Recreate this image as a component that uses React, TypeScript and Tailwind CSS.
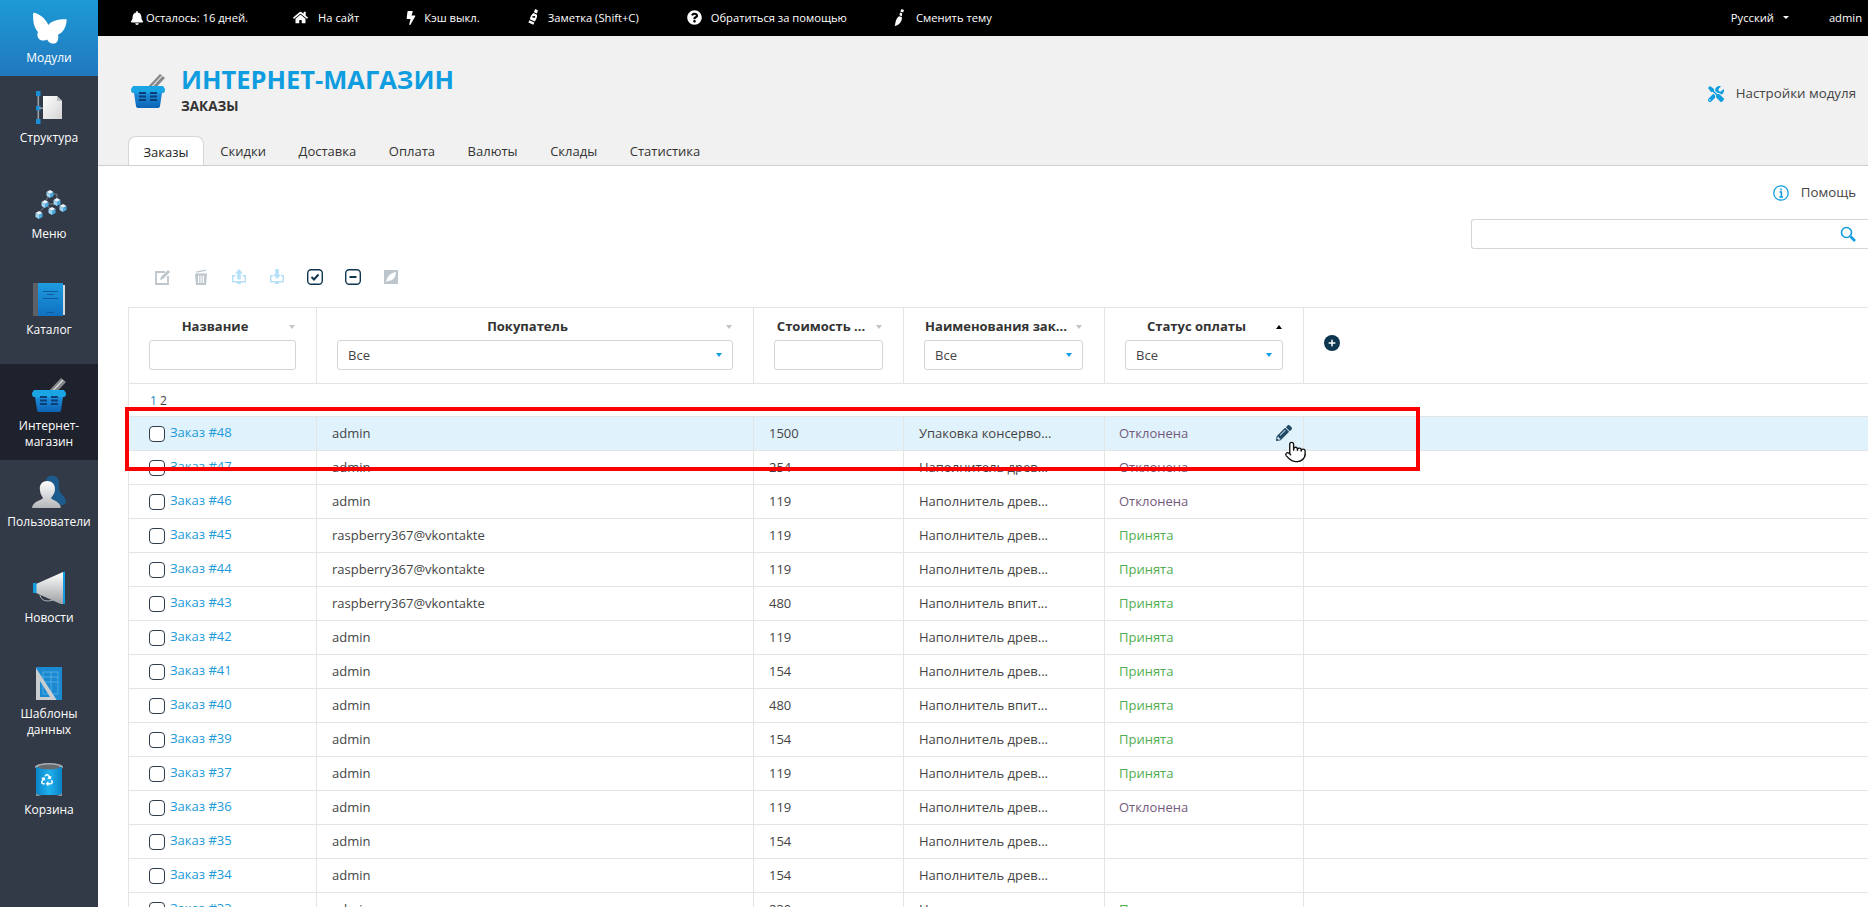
import { FaBell, FaHome, FaBolt, FaQuestionCircle, FaTools, FaPencilAlt, FaRecycle, FaPlus } from "react-icons/fa"
import { Pointer } from "lucide-react"
import type { ReactNode } from "react"

const COLS = ["w-[188px]", "w-[437px]", "w-[150px]", "w-[201px]", "w-[199px]"]

const ORDERS = [
    { id: 48, buyer: "admin", cost: "1500", item: "Упаковка консерво...", status: "Отклонена" },
    { id: 47, buyer: "admin", cost: "254", item: "Наполнитель древ...", status: "Отклонена" },
    { id: 46, buyer: "admin", cost: "119", item: "Наполнитель древ...", status: "Отклонена" },
    { id: 45, buyer: "raspberry367@vkontakte", cost: "119", item: "Наполнитель древ...", status: "Принята" },
    { id: 44, buyer: "raspberry367@vkontakte", cost: "119", item: "Наполнитель древ...", status: "Принята" },
    { id: 43, buyer: "raspberry367@vkontakte", cost: "480", item: "Наполнитель впит...", status: "Принята" },
    { id: 42, buyer: "admin", cost: "119", item: "Наполнитель древ...", status: "Принята" },
    { id: 41, buyer: "admin", cost: "154", item: "Наполнитель древ...", status: "Принята" },
    { id: 40, buyer: "admin", cost: "480", item: "Наполнитель впит...", status: "Принята" },
    { id: 39, buyer: "admin", cost: "154", item: "Наполнитель древ...", status: "Принята" },
    { id: 37, buyer: "admin", cost: "119", item: "Наполнитель древ...", status: "Принята" },
    { id: 36, buyer: "admin", cost: "119", item: "Наполнитель древ...", status: "Отклонена" },
    { id: 35, buyer: "admin", cost: "154", item: "Наполнитель древ...", status: "" },
    { id: 34, buyer: "admin", cost: "154", item: "Наполнитель древ...", status: "" },
    { id: 33, buyer: "admin", cost: "230", item: "Наполнитель древ...", status: "Принята" },
]

function Butterfly() {
    return (
        <svg viewBox="0 0 36 36" className="h-9 w-9">
            <path
                fill="#fff"
                d="M2.3 2.7 C8 3 15 9 17.3 15 C20 11 28 9 35.7 9.3 C35.5 15 34 19 31 22 C29 24 27 24.5 27 25 C28 28 27 32 24 33.5 C21 34 18 33 16 29.5 C14 31 10 31 8 29 C6 27 6 24 7 22 C3 18 1.5 10 2.3 2.7Z"
            />
        </svg>
    )
}

function StructureIcon() {
    return (
        <svg viewBox="0 0 36 36" className="h-9 w-9">
            <defs>
                <linearGradient id="docg" x1="0" y1="0" x2="1" y2="1">
                    <stop offset="0" stopColor="#fff" />
                    <stop offset="1" stopColor="#d4d4d4" />
                </linearGradient>
            </defs>
            <rect x="6.5" y="4" width="1.6" height="30" fill="#9aa0a6" />
            <rect x="5" y="3" width="4.5" height="5" fill="#1a8fd6" />
            <rect x="5" y="18" width="4.5" height="4.5" fill="#1a8fd6" />
            <rect x="5" y="31" width="4.5" height="5" fill="#1a8fd6" />
            <rect x="8" y="19.5" width="5" height="1.4" fill="#9aa0a6" />
            <path d="M12 8 H26 L31 13 V31 H12Z" fill="url(#docg)" />
            <path d="M26 8 L31 13 H26Z" fill="#bdbdbd" />
        </svg>
    )
}

function Cube({ x, y }: { x: number; y: number }) {
    return (
        <g>
            <path d={`M${x - 3.5} ${y - 2} L${x} ${y - 4} L${x + 3.5} ${y - 2} L${x} ${y}Z`} fill="#e8f4fb" />
            <path d={`M${x - 3.5} ${y - 2} L${x} ${y} V${y + 4} L${x - 3.5} ${y + 2}Z`} fill="#9fd4f2" />
            <path d={`M${x + 3.5} ${y - 2} L${x} ${y} V${y + 4} L${x + 3.5} ${y + 2}Z`} fill="#4ba9e0" />
        </g>
    )
}

function MenuIcon() {
    return (
        <svg viewBox="0 0 36 36" className="h-9 w-9">
            <path
                d="M19 10 H26 V16 M19 10 L14 18 M14 20 H26 M26 18 L32 23 M14 20 L21 26 M14 22 L8 29"
                stroke="#8d939a"
                strokeWidth="0.8"
                fill="none"
            />
            <Cube x={19} y={10} />
            <Cube x={14} y={20} />
            <Cube x={26} y={18} />
            <Cube x={21} y={27} />
            <Cube x={32} y={24} />
            <Cube x={8} y={31} />
        </svg>
    )
}

function BookIcon() {
    return (
        <svg viewBox="0 0 36 36" className="h-9 w-9">
            <defs>
                <linearGradient id="bookg" x1="0" y1="0" x2="0" y2="1">
                    <stop offset="0" stopColor="#1e9be0" />
                    <stop offset="1" stopColor="#0f6fc0" />
                </linearGradient>
            </defs>
            <rect x="2" y="3" width="5" height="34" fill="#5d6166" />
            <rect x="7" y="3" width="25" height="34" fill="url(#bookg)" />
            <rect x="32" y="5" width="2" height="30" fill="#d6dadd" />
            <rect x="12" y="11" width="15" height="1" fill="#0d5a9c" />
            <rect x="16" y="14" width="7" height="1" fill="#0d5a9c" />
            <rect x="12" y="18" width="15" height="1" fill="#0d5a9c" />
            <rect x="16" y="32" width="7" height="1" fill="#0d5a9c" />
        </svg>
    )
}

function BasketIcon() {
    const vents = [20, 23.5, 27]
    return (
        <svg viewBox="0 0 36 36" className="h-9 w-9">
            <defs>
                <linearGradient id="bskg" x1="0" y1="0" x2="0" y2="1">
                    <stop offset="0" stopColor="#1d8fdc" />
                    <stop offset="1" stopColor="#0d62b4" />
                </linearGradient>
            </defs>
            <path d="M14 19 L30 2 L35 6 L19 23Z" fill="#85888b" />
            <path d="M17 20 L32 4" stroke="#dcdcdc" strokeWidth="1.1" />
            <path d="M3 14 H33 L35 17 C35 20 34 21 33 21 H3 C2 21 1 20 1 17Z" fill="#1aa6e4" />
            <path d="M4 21 H32 L30 34 C30 35 29 36 28 36 H8 C7 36 6 35 6 34Z" fill="url(#bskg)" />
            {vents.map((y) => (
                <g key={y} fill="#0a3f78">
                    <rect x="9" y={y} width="7" height="2" />
                    <rect x="20" y={y} width="7" height="2" />
                </g>
            ))}
        </svg>
    )
}

function UserIcon() {
    return (
        <svg viewBox="0 0 36 36" className="h-9 w-9">
            <defs>
                <linearGradient id="usrg" x1="0" y1="0" x2="0" y2="1">
                    <stop offset="0" stopColor="#fff" />
                    <stop offset="1" stopColor="#b4b6b8" />
                </linearGradient>
            </defs>
            <path
                d="M15 8 C16 4 20 3 24 4 C29 6 28 13 28 17 C29 22 34 24 35 29 C35 32 33 33 31 33 H22Z"
                fill="#1c5b8c"
            />
            <path
                d="M16 9 C11 9 8 13 9 18 C9 22 11 24 12 26 C11 28 3 29 1 35 C1 36 2 36 3 36 H29 C30 36 30 35 29 33 C27 29 21 28 20 26 C22 23 24 21 24 17 C24 12 21 9 16 9Z"
                fill="url(#usrg)"
            />
        </svg>
    )
}

function NewsIcon() {
    return (
        <svg viewBox="0 0 36 36" className="h-9 w-9">
            <defs>
                <linearGradient id="megg" x1="0" y1="0" x2="0" y2="1">
                    <stop offset="0" stopColor="#fff" />
                    <stop offset="1" stopColor="#9b9ea1" />
                </linearGradient>
            </defs>
            <path d="M9 27 C10 33 16 34 22 32" stroke="#cfd2d4" strokeWidth="0.8" fill="none" />
            <path d="M5 16 L32 4 V37 L5 25Z" fill="url(#megg)" />
            <rect x="2" y="15" width="3.5" height="10" fill="#129be0" />
            <path d="M32 4 L34 3.5 V37 L32 37Z" fill="#129be0" />
        </svg>
    )
}

function TemplateIcon() {
    return (
        <svg viewBox="0 0 36 36" className="h-9 w-9">
            <rect x="5" y="3" width="26" height="33" fill="#1c8ad0" />
            <g stroke="#62b7ea" strokeWidth="0.7" fill="none">
                <rect x="12" y="8" width="15" height="22" />
                <path d="M12 13 H27 M12 18 H27 M20 8 V30" />
            </g>
            <path fillRule="evenodd" d="M5 4 L27 38 H5Z M9 17 V33 H19Z" fill="#c9cdd0" />
        </svg>
    )
}

function TrashIcon() {
    return (
        <svg viewBox="0 0 36 36" className="h-9 w-9">
            <defs>
                <linearGradient id="trg" x1="0" y1="0" x2="1" y2="0">
                    <stop offset="0" stopColor="#0b84c6" />
                    <stop offset="0.5" stopColor="#1fb0ee" />
                    <stop offset="1" stopColor="#0b84c6" />
                </linearGradient>
            </defs>
            <ellipse cx="18" cy="7" rx="14" ry="4" fill="#a9adb0" />
            <rect x="5" y="7" width="26" height="28" fill="url(#trg)" />
            <ellipse cx="18" cy="7" rx="11" ry="2.4" fill="#666b70" />
            <path d="M5 33 C8 38 28 38 31 33 V36 C28 39 8 39 5 36Z" fill="#8d9195" />
            <FaRecycle x="10" y="14" width="16" height="16" color="#fff" />
        </svg>
    )
}

function NoteIcon() {
    return (
        <svg viewBox="0 0 14 20" className="h-[18px] w-[13px]" fill="#fff">
            <path d="M10 0 L13 1.5 L12 5 L8.5 3.5Z" />
            <path d="M8 4.5 L12 6.5 C12.5 9 11 12 9.5 14 L4 11.5 C4.5 9 6 6 8 4.5Z M8.4 8 A1 1 0 1 0 8.5 9.5 A1 1 0 1 0 8.4 8Z" fillRule="evenodd" />
            <path d="M3.5 12.5 L9 15 L8 17.5 L2.5 15Z" />
        </svg>
    )
}

function BrushIcon() {
    return (
        <svg viewBox="0 0 12 20" className="h-[18px] w-[11px]" fill="#fff">
            <path d="M8 0 L11 1 L10 4 L7 3Z" />
            <path d="M6.5 4 L9 5 L8.5 8 L6 7Z" />
            <path d="M5.5 8 L8.5 9 C9.5 13 6 18 1 19 C0.5 19 0.5 18.5 1 18 C1.5 16 1.5 11 5.5 8Z" />
        </svg>
    )
}

function TopItem({ icon, label, gap }: { icon: ReactNode; label: string; gap: string }) {
    return (
        <div className={`flex items-center ${gap}`}>
            {icon}
            <span>{label}</span>
        </div>
    )
}

function TopBar() {
    return (
        <div className="flex h-9 shrink-0 items-center bg-black pl-[32px] pr-[6px] text-[11.2px] text-white">
            <div className="flex items-center">
                <TopItem icon={<FaBell className="text-[14px]" />} label="Осталось: 16 дней." gap="gap-[2px]" />
                <div className="ml-[45px]">
                    <TopItem icon={<FaHome className="text-[15px]" />} label="На сайт" gap="gap-[10px]" />
                </div>
                <div className="ml-[45px]">
                    <TopItem icon={<FaBolt className="text-[14px]" />} label="Кэш выкл." gap="gap-[6px]" />
                </div>
                <div className="ml-[46px]">
                    <TopItem icon={<NoteIcon />} label="Заметка (Shift+C)" gap="gap-[9px]" />
                </div>
                <div className="ml-[48px]">
                    <TopItem icon={<FaQuestionCircle className="text-[15px]" />} label="Обратиться за помощью" gap="gap-[9px]" />
                </div>
                <div className="ml-[47px]">
                    <TopItem icon={<BrushIcon />} label="Сменить тему" gap="gap-[11px]" />
                </div>
            </div>
            <div className="ml-auto flex items-center">
                <span>Русский</span>
                <span className="ml-[9px] h-0 w-0 border-x-[3px] border-t-[3px] border-x-transparent border-t-white" />
                <span className="ml-[40px]">admin</span>
            </div>
        </div>
    )
}

const SIDE_ITEMS = [
    { label: ["Структура"], icon: <StructureIcon /> },
    { label: ["Меню"], icon: <MenuIcon /> },
    { label: ["Каталог"], icon: <BookIcon /> },
    { label: ["Интернет-", "магазин"], icon: <BasketIcon />, active: true },
    { label: ["Пользователи"], icon: <UserIcon /> },
    { label: ["Новости"], icon: <NewsIcon /> },
    { label: ["Шаблоны", "данных"], icon: <TemplateIcon /> },
    { label: ["Корзина"], icon: <TrashIcon /> },
]

function Sidebar() {
    return (
        <div className="flex w-[98px] shrink-0 flex-col bg-[#333a47] text-center text-[12px] leading-4 text-white">
            <div className="flex h-[76px] flex-col items-center bg-gradient-to-b from-[#1c9ad6] to-[#2178be] pt-[10px]">
                <Butterfly />
                <div className="mt-[4px]">Модули</div>
            </div>
            {SIDE_ITEMS.map((it) => (
                <div
                    key={it.label[0]}
                    className={`flex h-[96px] flex-col items-center pt-[12px] ${it.active ? "bg-[#1e222c]" : ""}`}
                >
                    {it.icon}
                    <div className="mt-[6px]">
                        {it.label.map((l) => (
                            <div key={l}>{l}</div>
                        ))}
                    </div>
                </div>
            ))}
        </div>
    )
}

function Header() {
    const tabs = ["Скидки", "Доставка", "Оплата", "Валюты", "Склады", "Статистика"]
    return (
        <div className="flex h-[130px] shrink-0 flex-col border-b border-[#cfcfcf] bg-[#f1f1f1]">
            <div className="flex h-[101px] items-start pl-[32px] pr-[12px] pt-[27px]">
                <div className="mt-[9px]">
                    <BasketIcon />
                </div>
                <div className="ml-[15px]">
                    <div className="text-[25.5px] font-bold leading-8 text-[#0f9ddf]">ИНТЕРНЕТ-МАГАЗИН</div>
                    <div className="mt-[3px] text-[13.5px] font-bold leading-4 text-[#333]">ЗАКАЗЫ</div>
                </div>
                <div className="ml-auto mt-[21px] flex h-5 items-center gap-[12px] text-[13.3px] text-[#444]">
                    <FaTools className="text-[16px] text-[#0f9ddf]" />
                    Настройки модуля
                </div>
            </div>
            <div className="flex h-[29px] pl-[30px] text-[13px] text-[#333]">
                <div className="-mb-px flex h-[29px] w-[76px] items-center justify-center rounded-t-[8px] border border-b-0 border-[#d6d6d6] bg-white pt-[2px] text-[#222]">
                    Заказы
                </div>
                {tabs.map((t) => (
                    <div key={t} className="flex items-center px-[16.3px] pt-[2px] first:pl-[18px]">
                        {t}
                    </div>
                ))}
            </div>
        </div>
    )
}

function Toolbar() {
    return (
        <div className="ml-[57px] mt-5 flex h-4 gap-[22px]">
            <svg viewBox="0 0 16 16" className="h-4 w-4" fill="none">
                <path d="M10 3 H1 V15 H13 V7" stroke="#bcc6cc" strokeWidth="1.8" />
                <path d="M5 11 L6 8 L13 1 L15 3 L8 10Z" fill="#bcc6cc" />
            </svg>
            <svg viewBox="0 0 16 16" className="h-4 w-4" fill="#bcc6cc">
                <path d="M3 2.5 L13 0.5 L13.3 1.7 L3.2 3.7Z" />
                <path d="M2 4.5 H14 L13 16 H3Z M5 6.5 V14 H6.3 V6.5Z M7.4 6.5 V14 H8.6 V6.5Z M9.7 6.5 V14 H11 V6.5Z" fillRule="evenodd" />
            </svg>
            <svg viewBox="0 0 16 16" className="h-4 w-4" fill="#b5e0f7">
                <path d="M8 0 L12 4.5 H9.8 V10.5 H6.2 V4.5 H4Z" />
                <path d="M1 6 H4.5 V7.5 H2.5 V12 H13.5 V7.5 H11.5 V6 H15 V13.5 H10 V15 H6 V13.5 H1Z" />
            </svg>
            <svg viewBox="0 0 16 16" className="h-4 w-4" fill="#b5e0f7">
                <path d="M8 10 L4 5.5 H6.2 V0 H9.8 V5.5 H12Z" />
                <path d="M1 6 H4 V7.5 H2.5 V12 H13.5 V7.5 H12 V6 H15 V13.5 H10 V15 H6 V13.5 H1Z" />
            </svg>
            <svg viewBox="0 0 16 16" className="h-4 w-4" fill="none" stroke="#0f3650">
                <rect x="0.7" y="0.7" width="14.6" height="14.6" rx="3.5" strokeWidth="1.4" />
                <path d="M4.5 8 L7 10.5 L11.5 5.5" strokeWidth="2" />
            </svg>
            <svg viewBox="0 0 16 16" className="h-4 w-4" fill="none" stroke="#0f3650">
                <rect x="0.7" y="0.7" width="14.6" height="14.6" rx="3.5" strokeWidth="1.4" />
                <path d="M4.5 8 H11.5" strokeWidth="2" />
            </svg>
            <svg viewBox="0 0 16 16" className="h-4 w-4" fill="#bcc6cc">
                <path fillRule="evenodd" d="M1 1 H15 V15 H1Z M3 13 C4 8 7 4 13 3 C13 8 10 12 5 12 L3 13Z" />
            </svg>
        </div>
    )
}

function Caret({ up }: { up?: boolean }) {
    if (up) return <span className="h-0 w-0 border-x-[3px] border-b-[4px] border-x-transparent border-b-black" />
    return <span className="h-0 w-0 border-x-[3px] border-t-[4px] border-x-transparent border-t-[#c4c4c4]" />
}

function HeadCell({ width, title, up, pr = "pr-5", children }: { width: string; title: string; up?: boolean; pr?: string; children: ReactNode }) {
    return (
        <div className={`${width} shrink-0 border-r border-[#e4e4e4] pl-5 ${pr} pt-[9px]`}>
            <div className="flex h-5 items-center">
                <div className="flex-1 whitespace-nowrap text-center text-[13px] font-bold text-[#333]">{title}</div>
                <div className="flex w-[15px] justify-end pr-[1px]">
                    <Caret up={up} />
                </div>
            </div>
            <div className="mt-[3px]">{children}</div>
        </div>
    )
}

function TextFilter() {
    return <input className="block h-[30px] w-full rounded-[3px] border border-[#d5d5d5] bg-white outline-none" />
}

function SelectFilter() {
    return (
        <div className="flex h-[30px] items-center justify-between rounded-[3px] border border-[#d5d5d5] bg-white pl-[10px] pr-[10px] text-[13px] text-[#444]">
            <span className="translate-y-px">Все</span>
            <span className="h-0 w-0 border-x-[3px] border-t-[4px] border-x-transparent border-t-[#0f9ddf]" />
        </div>
    )
}

function OrdersTable() {
    return (
        <div className="relative ml-[30px] mt-[22px] text-[13px] text-[#444]">
            <div className="flex h-[77px] border-y border-l border-[#e4e4e4]">
                <HeadCell width={COLS[0]} title="Название">
                    <TextFilter />
                </HeadCell>
                <HeadCell width={COLS[1]} title="Покупатель">
                    <SelectFilter />
                </HeadCell>
                <HeadCell width={COLS[2]} title="Стоимость ...">
                    <TextFilter />
                </HeadCell>
                <HeadCell width={COLS[3]} title="Наименования зак..." pr="pr-[21px]">
                    <SelectFilter />
                </HeadCell>
                <HeadCell width={COLS[4]} title="Статус оплаты" up>
                    <SelectFilter />
                </HeadCell>
                <div className="flex-1 pl-[20px] pt-[27px]">
                    <span className="flex h-4 w-4 items-center justify-center rounded-full bg-[#0f3650] text-white">
                        <FaPlus className="text-[8px]" />
                    </span>
                </div>
            </div>
            <div className="flex h-[33px] items-center border-b border-l border-[#e4e4e4] pl-[21px] pt-[2px] text-[12px]">
                <span className="text-[#2a86c0]">1</span>
                <span className="ml-[3px]">2</span>
            </div>
            {ORDERS.map((o, i) => (
                <div key={o.id} className={`flex h-[34px] border-b border-l border-[#e4e4e4] ${i === 0 ? "bg-[#e0f2fc]" : ""}`}>
                    <div className={`${COLS[0]} flex shrink-0 items-center border-r border-[#e4e4e4] pl-5`}>
                        <span className="h-4 w-4 rounded-[4px] border border-[#2f3d4c] bg-white" />
                        <span className="ml-[5px] -translate-y-px text-[#1c9bd8]">Заказ #{o.id}</span>
                    </div>
                    <div className={`${COLS[1]} flex shrink-0 items-center border-r border-[#e4e4e4] pl-[15px]`}>{o.buyer}</div>
                    <div className={`${COLS[2]} flex shrink-0 items-center border-r border-[#e4e4e4] pl-[15px]`}>{o.cost}</div>
                    <div className={`${COLS[3]} flex shrink-0 items-center border-r border-[#e4e4e4] pl-[15px]`}>{o.item}</div>
                    <div className={`${COLS[4]} flex shrink-0 items-center justify-between border-r border-[#e4e4e4] pl-[14px] pr-[11px]`}>
                        <span className={o.status === "Принята" ? "text-[#4fae4f]" : "text-[#735a7c]"}>{o.status}</span>
                        {i === 0 && <FaPencilAlt className="-translate-y-px text-[16px] text-[#1f4a66]" />}
                    </div>
                </div>
            ))}
            {/* red highlight and pointer drawn over the first row */}
            <div className="pointer-events-none absolute left-[-3px] top-[100px] h-[64px] w-[1295px] border-[4px] border-[#fb0000]" />
            <Pointer className="absolute left-[1156px] top-[131px] h-[28px] w-[23px]" fill="#fff" stroke="#111" strokeWidth={1.4} />
        </div>
    )
}

export default function App() {
    return (
        <div className="flex h-[907px] w-[1868px] overflow-hidden bg-white font-['Open_Sans',sans-serif]">
            <Sidebar />
            <div className="flex min-w-0 flex-1 flex-col">
                <TopBar />
                <Header />
                <div className="min-h-0 flex-1 pt-[17px]">
                    <div className="flex h-5 items-center justify-end gap-[12px] pr-[12px] text-[13.3px] text-[#444]">
                        <svg viewBox="0 0 16 16" className="h-4 w-4" fill="none" stroke="#0f9ddf">
                            <circle cx="8" cy="8" r="7.2" strokeWidth="1.3" />
                            <path d="M8 3.6 V5.4 M6.5 7 H8.4 V12 M6.3 12 H10" strokeWidth="1.5" />
                        </svg>
                        Помощь
                    </div>
                    <div className="ml-auto mt-4 flex h-[30px] w-[397px] items-center justify-end rounded-l-[3px] border-y border-l border-[#d5d5d5] pr-[12px]">
                        <svg viewBox="0 0 16 16" className="h-4 w-4" fill="none" stroke="#0f9ddf">
                            <circle cx="6.5" cy="6.5" r="5" strokeWidth="1.6" />
                            <path d="M10.5 10.5 L15 15" strokeWidth="2.6" />
                        </svg>
                    </div>
                    <Toolbar />
                    <OrdersTable />
                </div>
            </div>
        </div>
    )
}
